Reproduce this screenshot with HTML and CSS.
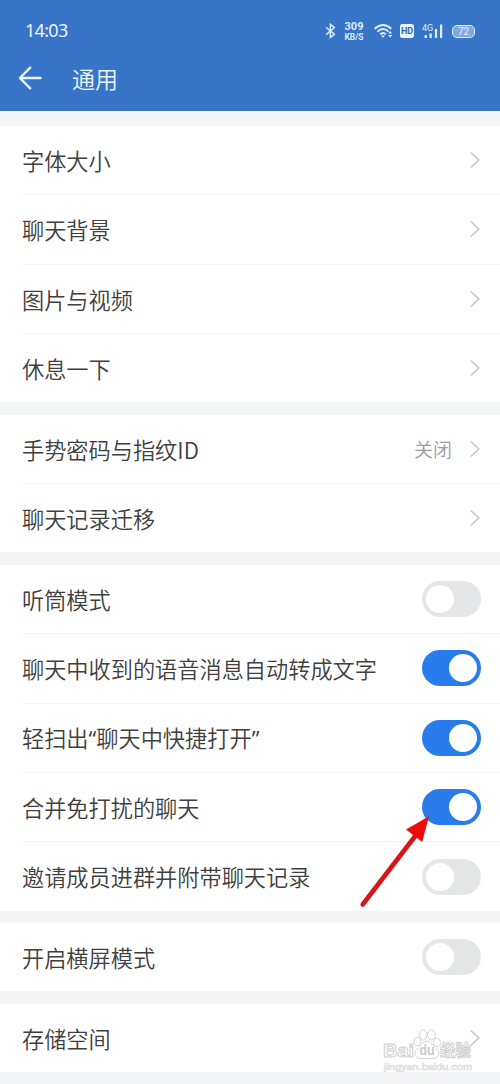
FILE: index.html
```html
<!DOCTYPE html>
<html lang="zh-CN">
<head>
<meta charset="utf-8">
<title>通用</title>
<link rel="stylesheet" href="styles.css">
</head>
<body>
<svg class="defs" width="0" height="0" aria-hidden="true">
  <symbol id="chevron" viewBox="0 0 12 18"><path d="M1.8 1.5 9.8 9 1.8 16.5" fill="none" stroke="#c9c9c9" stroke-width="1.7"/></symbol>
</svg>
<main class="screen">
  <header class="header">
    <div class="status">
      <span class="clock">14:03</span>
      <div class="indicators">
        <svg class="bluetooth" width="11" height="16" viewBox="0 0 11 16"><path d="M1 4.2 9.4 11.3 5.4 14.4V1.4L9.4 4.6 1 11.8" fill="none" stroke="currentColor" stroke-width="1.5"/></svg>
        <div class="speed"><span>309</span><span class="unit">KB/S</span></div>
        <svg class="wifi" width="20" height="16" viewBox="0 0 20 16"><g fill="none" stroke="currentColor" stroke-width="1.9"><path d="M.6 5.8Q9 -1.8 17.4 5.8"/><path d="M3.4 8.6Q9 3.6 14.6 8.6"/><path d="M6.2 11.3Q9 8.8 11.8 11.3"/></g><path d="M7 12.4h4L9 14.8zM14.2 10.6l2-2.6 2 2.6zM14.2 12l2 2.6 2-2.6z" fill="currentColor"/></svg>
        <span class="hd">HD</span>
        <div class="cell"><span class="net">4G</span><svg width="21" height="16" viewBox="0 0 21 16"><path d="M2.6 12h2.3v3H2.6zM7.5 10.4h2.3v4.6H7.5zM12.9 6h2.2v9h-2.2zM18 1.6h2.2V15H18z" fill="currentColor"/></svg></div>
        <span class="battery">72</span>
      </div>
    </div>
    <div class="titlebar">
      <svg width="24" height="24" viewBox="0 0 24 24"><path d="M12.2 1.7 1.9 12l10.3 10.3M2.2 12H22.5" fill="none" stroke="currentColor" stroke-width="2.4" stroke-linecap="round" stroke-linejoin="round"/></svg>
      <h1 class="title">通用</h1>
    </div>
  </header>

  <section class="group">
    <div class="row"><span>字体大小</span><svg class="chevron"><use href="#chevron"/></svg></div>
    <div class="row"><span>聊天背景</span><svg class="chevron"><use href="#chevron"/></svg></div>
    <div class="row"><span>图片与视频</span><svg class="chevron"><use href="#chevron"/></svg></div>
    <div class="row"><span>休息一下</span><svg class="chevron"><use href="#chevron"/></svg></div>
  </section>

  <section class="group">
    <div class="row"><span>手势密码与指纹ID</span><span class="value">关闭</span><svg class="chevron"><use href="#chevron"/></svg></div>
    <div class="row"><span>聊天记录迁移</span><svg class="chevron"><use href="#chevron"/></svg></div>
  </section>

  <section class="group">
    <div class="row"><span>听筒模式</span><span class="switch"></span></div>
    <div class="row"><span>聊天中收到的语音消息自动转成文字</span><span class="switch on"></span></div>
    <div class="row"><span>轻扫出<span class="quote">“</span>聊天中快捷打开<span class="quote">”</span></span><span class="switch on"></span></div>
    <div class="row"><span>合并免打扰的聊天</span><span class="switch on"></span></div>
    <div class="row"><span>邀请成员进群并附带聊天记录</span><span class="switch"></span></div>
  </section>

  <section class="group">
    <div class="row"><span>开启横屏模式</span><span class="switch"></span></div>
  </section>

  <section class="group">
    <div class="row"><span>存储空间</span><svg class="chevron"><use href="#chevron"/></svg></div>
  </section>

  <svg class="pointer" width="74" height="94" viewBox="0 0 74 94"><path d="M6.7 88.5 60 19" stroke="#d8141a" stroke-width="4.6" stroke-linecap="round"/><path d="M73 0.3 66.2 26 50 13.6Z" fill="#ed0b0d"/></svg>

  <svg class="watermark" width="100" height="50" viewBox="0 0 100 50">
    <g fill="#fff" stroke="#cecece" stroke-width=".9">
      <g class="wm-bold"><text x="3" y="33" textLength="31" lengthAdjust="spacingAndGlyphs" font-size="19">Bai</text><text class="wm-cjk" x="60" y="32" font-size="15.5" textLength="31" lengthAdjust="spacingAndGlyphs">经验</text></g>
      <ellipse cx="37.5" cy="17.5" rx="3.4" ry="4.2"/><ellipse cx="43.3" cy="11" rx="3.8" ry="5"/><ellipse cx="51.5" cy="11" rx="3.8" ry="5"/><ellipse cx="57" cy="18.5" rx="3.2" ry="4.2"/>
      <path d="M47 17c3.2 0 5 3 7.2 5.4 2.8 3 5 4.8 4.3 8-.8 3.6-4 4.3-11.5 4.3s-11.2-.4-12-4.3c-.6-3.2 2-5 4.8-8 2.2-2.4 4-5.4 7.2-5.4z"/>
    </g>
    <text class="wm-bold" x="39.5" y="31" font-size="14" textLength="15" lengthAdjust="spacingAndGlyphs" fill="#cacaca">du</text>
    <text class="wm-url" x="4" y="46" font-size="9.5" textLength="88" lengthAdjust="spacingAndGlyphs" fill="#fff" stroke="#dedede" stroke-width=".7">jingyan.baidu.com</text>
  </svg>
</main>
</body>
</html>
```

FILE: styles.css
```css
* { box-sizing: border-box; }

body {
  margin: 0;
  font-family: "Noto Sans CJK SC", sans-serif;
  color: #404040;
  background: #f4f5f7;
}

.defs { position: absolute; }

.screen {
  position: relative;
  height: 1084px;
  overflow: hidden;
  display: flex;
  flex-direction: column;
  gap: 12.4px;
}

.header {
  flex: none;
  height: 111px;
  margin-bottom: 2.4px;
  padding-top: 16px;
  background: #3874c7;
  color: #eaf5ff;
}

.status {
  display: flex;
  justify-content: space-between;
  align-items: center;
  height: 30px;
  padding: 0 25px 0 25px;
}

.clock {
  font: 18px/28px "Noto Sans", sans-serif;
  letter-spacing: -0.7px;
  padding-bottom: 2px;
}

.indicators { display: flex; align-items: center; color: #dceeff; }

.speed {
  display: flex;
  flex-direction: column;
  align-items: center;
  gap: 1px;
  width: 20px;
  margin: 0 10px 0 8px;
  font: 700 11px/10px "Roboto", sans-serif;
}

.unit { font-size: 8.5px; line-height: 8px; }

.hd {
  width: 14px;
  height: 14px;
  margin: 0 8px 0 6px;
  border-radius: 2.5px;
  background: #eaf5ff;
  color: #3166ac;
  font: 700 9px/14px "Roboto", sans-serif;
  text-align: center;
}

.cell { position: relative; height: 16px; }

.net {
  position: absolute;
  left: 0;
  top: 0;
  font: 9px/10px "Roboto", sans-serif;
}

.cell svg { display: block; }

.battery {
  width: 23px;
  height: 13px;
  margin-left: 9px;
  border: 1.4px solid #dceeff;
  border-radius: 5px;
  background: #7da9df;
  color: #eaf5ff;
  font: 10px/11px "Roboto", sans-serif;
  text-align: center;
}

.titlebar {
  display: flex;
  align-items: center;
  gap: 30px;
  height: 64px;
  padding-left: 18px;
}

.title { margin: 0; font-size: 23px; font-weight: 350; line-height: 34px; }

.group { flex: none; background: #fff; }

.row {
  display: flex;
  align-items: center;
  height: 69.4px;
  padding-right: 19px;
  margin-left: 22px;
  border-bottom: 1px solid #f4f4f4;
  font-size: 22.2px;
  font-weight: 350;
  line-height: 32px;
}

.row:last-child { height: 68.35px; border-bottom: 0; }

.row > :first-child { margin-right: auto; padding-bottom: .5px; white-space: nowrap; }

.value { margin-right: 17px; font-size: 19px; color: #9d9d9d; }

.quote { font-family: "Open Sans", sans-serif; font-weight: 400; }

.chevron { width: 12px; height: 18px; }

.switch {
  display: flex;
  width: 59px;
  height: 36px;
  padding: 4px;
  border-radius: 18px;
  background: #e5e6e8;
}

.switch::before {
  content: "";
  width: 28px;
  height: 28px;
  border-radius: 50%;
  background: #fff;
}

.switch.on { justify-content: flex-end; background: #287ceb; }

.pointer { position: absolute; left: 356px; top: 816px; }

.watermark { position: absolute; left: 380px; top: 1024px; }

.wm-bold { font-family: "Liberation Sans", sans-serif; font-weight: 700; }

.wm-url { font-family: "Liberation Sans", sans-serif; }

.wm-cjk { font-family: "Noto Sans CJK SC", sans-serif; }
```
